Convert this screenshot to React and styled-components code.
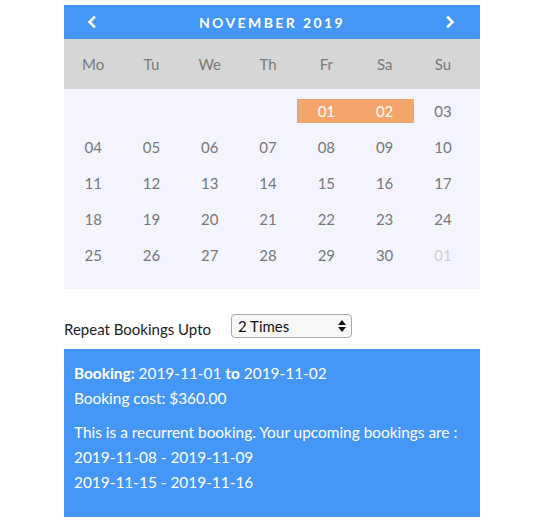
import React, { useState } from "react";
import styled, { createGlobalStyle } from "styled-components";

const GlobalStyle = createGlobalStyle`
  body {
    margin: 0;
    background: #fff;
    font-family: 'Lato', 'Open Sans', sans-serif;
  }
`

const Page = styled.div`
  width: 416px;
  padding: 5px 0 0 64px;
`

const Calendar = styled.div`
  width: 416px;
`

const Header = styled.div`
  height: 34px;
  background: #4496f7;
  display: flex;
  align-items: center;
  justify-content: space-between;
  padding: 0 24px 0 22px;
  box-sizing: border-box;
  color: #fff;
`

const Month = styled.div`
  font-size: 14px;
  font-weight: 700;
  letter-spacing: 2.4px;
  margin-right: -2px;
`

const Arrow = styled.button`
  background: none;
  border: none;
  padding: 0;
  width: 10px;
  height: 12px;
  display: flex;
  align-items: center;
  justify-content: center;
  cursor: pointer;
`

const Weekdays = styled.div`
  height: 50px;
  background: #d6d6d6;
  display: grid;
  grid-template-columns: repeat(7, 58.3px);
  align-items: center;
`

const Weekday = styled.div`
  text-align: center;
  color: #7a7a7a;
  font-size: 15px;
`

const Days = styled.div`
  background: #f4f4fe;
  padding: 4px 0 16px;
  display: grid;
  grid-template-columns: repeat(7, 58.3px);
  grid-auto-rows: 36px;
  align-items: center;
`

const Day = styled.div`
  height: 24px;
  line-height: 24px;
  text-align: center;
  font-size: 15px;
  color: ${p => p.$selected ? '#fff' : p.$muted ? '#cfcfcf' : '#777'};
  background: ${p => p.$selected ? '#f4a56b' : 'transparent'};
`

const RepeatRow = styled.div`
  display: flex;
  align-items: center;
  margin-top: 25px;
  height: 24px;
`

const Label = styled.label`
  font-size: 15px;
  color: #222;
  margin-top: 6px;
  width: 167px;
`

const Select = styled.select`
  width: 121px;
  height: 24px;
  font-family: 'Lato', sans-serif;
  font-size: 15px;
  color: #111;
  background: #f7f7f7;
  border: 1px solid #a8a8a8;
  border-radius: 4px;
  padding: 0 6px;
  appearance: none;
  background-image: url("data:image/svg+xml;utf8,<svg xmlns='http://www.w3.org/2000/svg' width='8' height='12'><path d='M4 0L8 5H0z M4 12L0 7H8z' fill='%23111'/></svg>");
  background-repeat: no-repeat;
  background-position: right 5px center;
`

const Summary = styled.div`
  margin-top: 11px;
  background: #4496f7;
  color: #fff;
  padding: 12px 10px 22px;
  font-size: 15.4px;
  line-height: 25px;
`

const Line = styled.div`
  margin-bottom: ${p => p.$gap ? '9px' : '0'};
`

const Chevron = ({ dir }) => (
  <svg width="9" height="12" viewBox="0 0 9 12">
    <polyline
      points={dir === 'left' ? '7,1.5 2.5,6 7,10.5' : '2,1.5 6.5,6 2,10.5'}
      fill="none"
      stroke="#fff"
      strokeWidth="2.6"
      strokeLinecap="square"
    />
  </svg>
)

const weekdays = ['Mo', 'Tu', 'We', 'Th', 'Fr', 'Sa', 'Su']

export default function App() {
  const [times, setTimes] = useState('2')

  const cells = []
  for (let i = 0; i < 4; i++) cells.push({ key: 'e' + i, label: '' })
  for (let d = 1; d <= 30; d++) {
    cells.push({ key: 'd' + d, label: String(d).padStart(2, '0'), selected: d === 1 || d === 2 })
  }
  cells.push({ key: 'n1', label: '01', muted: true })

  return (
    <Page>
      <GlobalStyle />
      <Calendar>
        <Header>
          <Arrow aria-label="previous"><Chevron dir="left" /></Arrow>
          <Month>NOVEMBER 2019</Month>
          <Arrow aria-label="next"><Chevron dir="right" /></Arrow>
        </Header>
        <Weekdays>
          {weekdays.map(w => <Weekday key={w}>{w}</Weekday>)}
        </Weekdays>
        <Days>
          {cells.map(c => (
            <Day key={c.key} $selected={c.selected} $muted={c.muted}>{c.label}</Day>
          ))}
        </Days>
      </Calendar>
      <RepeatRow>
        <Label>Repeat Bookings Upto</Label>
        <Select value={times} onChange={e => setTimes(e.target.value)}>
          <option value="1">1 Time</option>
          <option value="2">2 Times</option>
          <option value="3">3 Times</option>
        </Select>
      </RepeatRow>
      <Summary>
        <Line><b>Booking:</b> 2019-11-01 <b>to</b> 2019-11-02</Line>
        <Line $gap>Booking cost: $360.00</Line>
        <Line>This is a recurrent booking. Your upcoming bookings are :</Line>
        <Line>2019-11-08 - 2019-11-09</Line>
        <Line>2019-11-15 - 2019-11-16</Line>
      </Summary>
    </Page>
  )
}
